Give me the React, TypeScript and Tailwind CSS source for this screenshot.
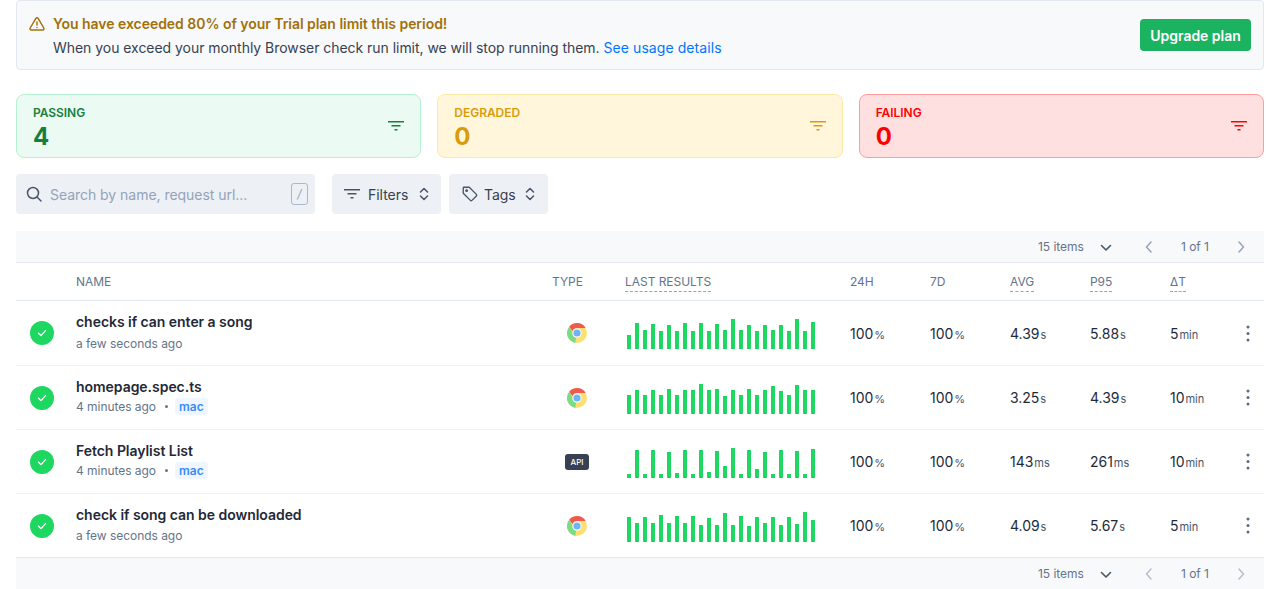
import React from "react";

const FilterIcon = ({ className = "" }: { className?: string }) => (
  <svg width="16" height="10" viewBox="0 0 16 10" fill="none" stroke="currentColor" strokeWidth="1.5" className={className}>
    <path d="M0 .75h16M3.5 4.75h9M6.5 8.75h3" />
  </svg>
);

const UpDown = () => (
  <svg width="10" height="14" viewBox="0 0 10 14" fill="none" stroke="#475569" strokeWidth="1.5" strokeLinecap="round" strokeLinejoin="round">
    <path d="M1.5 5 5 1.5 8.5 5M1.5 9 5 12.5 8.5 9" />
  </svg>
);

const Chrome = () => (
  <svg width="20" height="20" viewBox="0 0 20 20">
    <circle cx="10" cy="10" r="10" fill="#fde072" />
    <path d="M10 0a10 10 0 0 1 8.66 5H10a5 5 0 0 0-4.6 3L2.2 3.75A10 10 0 0 1 10 0Z" fill="#ef5a50" />
    <path d="M2.2 3.75 5.6 9.6a5 5 0 0 0 3.4 5.2L8.4 19.9A10 10 0 0 1 2.2 3.75Z" fill="#7bdc85" />
    <circle cx="10" cy="10" r="4.6" fill="#ffffff" />
    <circle cx="10" cy="10" r="3.6" fill="#6fb1fb" />
  </svg>
);

const Check = () => (
  <div className="flex h-6 w-6 items-center justify-center rounded-full bg-[#1ed760]">
    <svg width="12" height="12" viewBox="0 0 12 12" fill="none" stroke="#fff" strokeWidth="1.4" strokeLinecap="round" strokeLinejoin="round">
      <path d="M2.5 6.2 5 8.6l4.5-5" />
    </svg>
  </div>
);

const Dots = () => (
  <svg width="4" height="17" viewBox="0 0 4 17" fill="#5b6b82">
    <circle cx="2" cy="2" r="1.5" />
    <circle cx="2" cy="8.500" r="1.5" />
    <circle cx="2" cy="15" r="1.5" />
  </svg>
);

const Chev = ({ d, color }: { d: string; color: string }) => (
  <svg width="10" height="12" viewBox="0 0 10 12" fill="none" stroke={color} strokeWidth="1.5" strokeLinecap="round" strokeLinejoin="round">
    <path d={d} />
  </svg>
);

const Pager = ({ rowClass, color }: { rowClass: string; color: string }) => (
  <div className={`flex items-center bg-[#f8f9fb] text-xs text-[#64748b] ${rowClass}`}>
    <span className="ml-[1022px] w-[62px]">15 items</span>
    <svg width="12" height="8" viewBox="0 0 12 8" fill="none" stroke="#475569" strokeWidth="1.6" strokeLinecap="round" strokeLinejoin="round" className="mt-[2px]">
      <path d="M1.5 1.5 6 6l4.5-4.5" />
    </svg>
    <span className="ml-[32px]"><Chev d="M7 1 2.500 6 7 11" color={color} /></span>
    <span className="ml-[21px] w-[60px] pl-[6px]">1 of 1</span>
    <span className="ml-[1px]"><Chev d="M3 1l4.500 5L3 11" color={color} /></span>
  </div>
);

const Val = ({ n, u }: { n: string; u: string }) => (
  <div className="text-[14px] text-[#1f2937]">
    {n}
    <span className="ml-[1px] text-[11px] text-[#475569]">{u}</span>
  </div>
);

const Header = ({ children, dashed }: { children: React.ReactNode; dashed?: boolean }) => (
  <div className="pb-[4px]">
    <span className={`text-xs text-[#64748b] ${dashed ? "border-b border-dashed border-[#94a3b8] pb-[2px]" : ""}`}>{children}</span>
  </div>
);

const gridCols = "grid grid-cols-[60px_476px_73px_225px_80px_80px_80px_80px_60px_1fr] items-center";

type Row = {
  name: string;
  time: string;
  tag?: boolean;
  api?: boolean;
  bars: number[];
  vals: [string, string][];
  h: string;
  block: string;
  sub: string;
  barBox: string;
};

const rows: Row[] = [
  {
    name: "checks if can enter a song",
    time: "a few seconds ago",
    bars: [14, 26, 19, 25, 18, 24, 18, 26, 18, 26, 18, 25, 19, 30, 19, 24, 18, 24, 19, 24, 18, 30, 18, 27],
    vals: [["4.39", "s"], ["5.88", "s"], ["5", "min"]],
    h: "h-[65px]",
    block: "pb-[1px]",
    sub: "mt-[2px]",
    barBox: "mt-[2px]",
  },
  {
    name: "homepage.spec.ts",
    time: "4 minutes ago",
    tag: true,
    bars: [19, 24, 19, 24, 19, 25, 19, 24, 24, 30, 24, 25, 18, 24, 19, 25, 19, 24, 28, 23, 19, 29, 24, 24],
    vals: [["3.25", "s"], ["4.39", "s"], ["10", "min"]],
    h: "h-[64px]",
    block: "pb-[2px]",
    sub: "",
    barBox: "mt-[3px]",
  },
  {
    name: "Fetch Playlist List",
    time: "4 minutes ago",
    tag: true,
    api: true,
    bars: [4, 28, 4, 28, 4, 26, 5, 28, 4, 28, 6, 27, 12, 30, 4, 28, 9, 26, 4, 28, 4, 27, 4, 29],
    vals: [["143", "ms"], ["261", "ms"], ["10", "min"]],
    h: "h-[64px]",
    block: "pb-[2px]",
    sub: "",
    barBox: "mt-[3px]",
  },
  {
    name: "check if song can be downloaded",
    time: "a few seconds ago",
    bars: [25, 19, 25, 19, 27, 19, 26, 19, 26, 17, 24, 17, 29, 17, 26, 16, 25, 19, 25, 17, 25, 18, 30, 22],
    vals: [["4.09", "s"], ["5.67", "s"], ["5", "min"]],
    h: "h-[64px]",
    block: "",
    sub: "mt-[1px]",
    barBox: "mt-[3px]",
  },
];

const Card = ({ label, value, box, text, icon }: { label: string; value: string; box: string; text: string; icon: string }) => (
  <div className={`flex h-16 flex-1 items-center justify-between rounded-lg border pl-4 pr-4 ${box}`}>
    <div className="self-start pt-[10px]">
      <div className={`text-xs leading-4 font-semibold ${text}`}>{label}</div>
      <div className={`mt-[3px] text-2xl leading-[26px] font-bold ${text}`}>{value}</div>
    </div>
    <FilterIcon className={icon} />
  </div>
);

export default function App() {
  return (
    <div className="h-[589px] overflow-hidden bg-white px-4 font-['Inter',sans-serif] tracking-[-0.04px] antialiased">
      <div className="flex h-[70px] items-center justify-between rounded border border-[#e2e8f0] bg-[#f8f9fb] pl-3 pr-3">
        <div className="pt-[2px] text-sm">
          <div className="flex items-center gap-2 leading-6 font-semibold text-[#a1710a]">
            <svg width="16" height="16" viewBox="0 0 24 24" fill="none" stroke="#a1710a" strokeWidth="2.2" strokeLinecap="round" strokeLinejoin="round">
              <path d="M10.3 3.600 1.800 18a2 2 0 0 0 1.700 3h17a2 2 0 0 0 1.700-3L13.700 3.600a2 2 0 0 0-3.400 0Z" />
              <path d="M12 9v4.500M12 17.200h.01" />
            </svg>
            <span>You have exceeded 80% of your Trial plan limit this period!</span>
          </div>
          <div className="pl-6 leading-6 text-[#374151]">
            When you exceed your monthly Browser check run limit, we will stop running them.{" "}
            <span className="tracking-[0.08px] text-[#0075ff]">See usage details</span>
          </div>
        </div>
        <div className="flex h-8 w-[111px] items-center justify-center rounded bg-[#1bb35f] pt-[1px] text-sm font-semibold text-white">Upgrade plan</div>
      </div>

      <div className="mt-6 flex gap-4">
        <Card label="PASSING" value="4" box="border-[#b4f2d0] bg-[#ebfbf3]" text="text-[#15803d]" icon="text-[#15803d]" />
        <Card label="DEGRADED" value="0" box="border-[#fde9a6] bg-[#fff6dc]" text="text-[#d99c08]" icon="text-[#d99c08]" />
        <Card label="FAILING" value="0" box="border-[#ff9c9c] bg-[#ffe0e0]" text="text-[#ff0000]" icon="text-[#ff0000]" />
      </div>

      <div className="mt-4 flex h-10 gap-[17px]">
        <div className="flex w-[299px] items-center rounded bg-[#edf0f4] pl-[10px] pr-[7px]">
          <svg width="16" height="16" viewBox="0 0 16 16" fill="none" stroke="#475569" strokeWidth="1.5" strokeLinecap="round">
            <circle cx="7" cy="7" r="5.500" />
            <path d="m11 11 4 4" />
          </svg>
          <span className="ml-2 flex-1 pt-[2px] text-sm text-[#94a3b8]">Search by name, request url...</span>
          <span className="flex h-[22px] w-[17px] items-center justify-center rounded-[3px] border border-[#a9b8cb] text-xs text-[#94a3b8] italic">/</span>
        </div>
        <div className="flex w-[109px] items-center rounded bg-[#edf0f4] pl-3 text-sm text-[#374151]">
          <FilterIcon className="text-[#475569]" />
          <span className="ml-2 mr-[11px] pt-[2px]">Filters</span>
          <UpDown />
        </div>
        <div className="-ml-[9px] flex w-[99px] items-center rounded bg-[#edf0f4] pl-3 text-sm text-[#374151]">
          <svg width="18" height="18" viewBox="0 0 24 24" fill="none" stroke="#475569" strokeWidth="1.800" strokeLinecap="round" strokeLinejoin="round">
            <path d="M3 4v7l9.500 9.500a1.500 1.500 0 0 0 2.100 0l5.900-5.900a1.500 1.500 0 0 0 0-2.100L11 3H4a1 1 0 0 0-1 1Z" />
            <circle cx="7.500" cy="7.500" r="1" />
          </svg>
          <span className="ml-[5px] mr-[9px] pt-[2px]">Tags</span>
          <UpDown />
        </div>
      </div>

      <Pager rowClass="mt-[17px] h-8 border-b border-[#e2e8f0]" color="#94a3b8" />

      <div className={`${gridCols} h-[38px] border-b border-[#e2e8f0]`}>
        <div />
        <Header>NAME</Header>
        <Header>TYPE</Header>
        <Header dashed>LAST RESULTS</Header>
        <Header>24H</Header>
        <Header>7D</Header>
        <Header dashed>AVG</Header>
        <Header dashed>P95</Header>
        <Header dashed>ΔT</Header>
        <div />
      </div>

      {rows.map((r, i) => (
        <div key={r.name} className={`${gridCols} ${r.h} border-b ${i === rows.length - 1 ? "border-[#e2e8f0]" : "border-[#edf0f4]"}`}>
          <div className="pl-[14px]"><Check /></div>
          <div className={r.block}>
            <div className="text-sm leading-5 font-semibold text-[#1f2937]">{r.name}</div>
            <div className={`${r.sub} flex h-[20px] items-center text-xs text-[#64748b]`}>
              <span>{r.time}</span>
              {r.tag && (
                <>
                  <span className="ml-[9px] mr-[7px] h-[3px] w-[3px] rounded-full bg-[#64748b]" />
                  <span className="flex h-[17px] items-center rounded-[3px] bg-[#eff6ff] px-[4px] font-semibold text-[#3b8bf5]">mac</span>
                </>
              )}
            </div>
          </div>
          <div className="pl-[15px]">
            {r.api ? (
              <div className="-ml-[2px] flex h-4 w-6 items-center justify-center rounded-[3px] bg-[#374151] text-[8px] font-medium text-white">API</div>
            ) : (
              <Chrome />
            )}
          </div>
          <div className={`${r.barBox} flex h-[30px] items-end gap-1 pl-[2px]`}>
            {r.bars.map((b, j) => (
              <div key={j} className="w-1 bg-[#1ed760]" style={{ height: b }} />
            ))}
          </div>
          <Val n="100" u="%" />
          <Val n="100" u="%" />
          {r.vals.map(([n, u]) => (
            <Val key={n + u} n={n} u={u} />
          ))}
          <div className="flex justify-end pr-[14px]"><Dots /></div>
        </div>
      ))}

      <Pager rowClass="h-[32px]" color="#b4bfcc" />
    </div>
  );
}
